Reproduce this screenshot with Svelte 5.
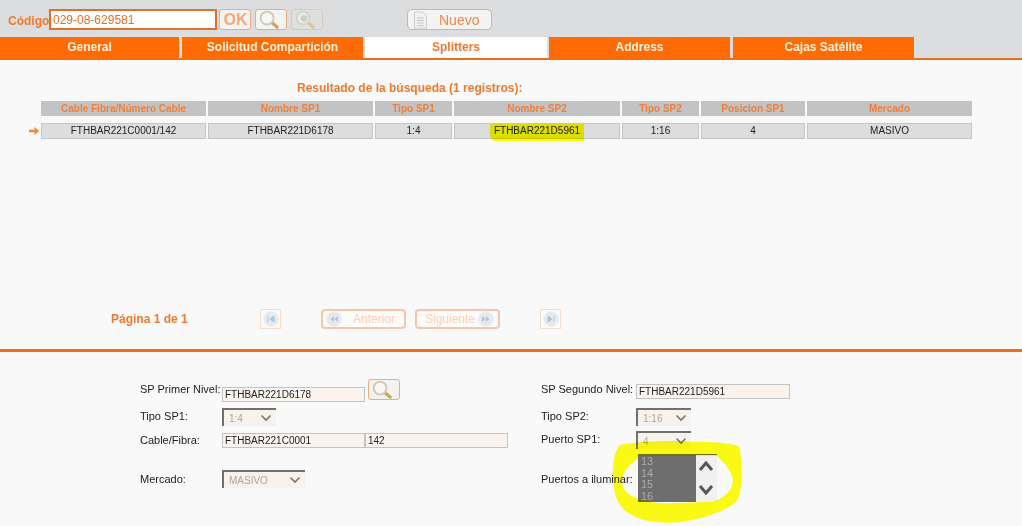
<script>
  // Búsqueda de splitters: barra de código, pestañas, resultados y detalle.
  const tabs = [
    { label: 'General', width: 179 },
    { label: 'Solicitud Compartición', width: 181, gap: 3 },
    { label: 'Splitters', width: 182, gap: 2, active: true },
    { label: 'Address', width: 181, gap: 2 },
    { label: 'Cajas Satélite', width: 181, gap: 3 }
  ];
  const columns = ['Cable Fibra/Número Cable', 'Nombre SP1', 'Tipo SP1', 'Nombre SP2', 'Tipo SP2', 'Posicion SP1', 'Mercado'];
  const row = ['FTHBAR221C0001/142', 'FTHBAR221D6178', '1:4', 'FTHBAR221D5961', '1:16', '4', 'MASIVO'];
  const ports = ['13', '14', '15', '16'];
</script>

{#snippet lens(faded)}
  <svg class="lens" class:faded viewBox="0 0 24 20" width="24" height="19" aria-hidden="true">
    <line x1="14.5" y1="13" x2="20.5" y2="18" stroke="#cda75e" stroke-width="3.4" stroke-linecap="round" />
    <circle cx="10" cy="8.5" r="6.8" fill="#f6f6f2" stroke="#cfc9b8" stroke-width="2" />
    {#if faded}<circle cx="11" cy="9" r="3.5" fill="#9cc8a0" />{/if}
  </svg>
{/snippet}

{#snippet pageIcon(kind)}
  <svg viewBox="0 0 18 18" width="18" height="18" aria-hidden="true">
    <circle cx="9" cy="9" r="7.5" fill="#e3eaf2" stroke="#eef1f5" />
    {#if kind === 'first'}
      <path d="M6 6v6M12 6L8 9l4 3z" fill="#b3c4d8" stroke="#b3c4d8" />
    {:else if kind === 'last'}
      <path d="M12 6v6M6 6l4 3-4 3z" fill="#b3c4d8" stroke="#b3c4d8" />
    {:else if kind === 'prev'}
      <path d="M9 6L5.500 9 9 12zM13 6L9.500 9l3.500 3z" fill="#b3c4d8" />
    {:else}
      <path d="M9 6l3.500 3L9 12zM5 6l3.500 3L5 12z" fill="#b3c4d8" />
    {/if}
  </svg>
{/snippet}

{#snippet caret()}
  <svg class="caret" viewBox="0 0 12 8" width="12" height="8" aria-hidden="true">
    <path d="M1.500 1.500L6 6l4.500-4.500" fill="none" stroke="#777" stroke-width="1.600" />
  </svg>
{/snippet}

<div class="page">
  <header class="topbar">
    <span class="code-label">Código</span>
    <input class="code-input" value="029-08-629581" />
    <button class="tool ok">OK</button>
    <button class="tool icon">{@render lens(false)}</button>
    <button class="tool icon off">{@render lens(true)}</button>
    <button class="tool nuevo">
      <svg viewBox="0 0 15 18" width="15" height="18" aria-hidden="true">
        <path d="M1.500 1h8l4 4v12h-12z" fill="#f1f1f1" stroke="#cfcfcf" />
        <path d="M4 7h7M4 9.500h7M4 12h7M4 14.500h7" stroke="#c8c8c8" />
      </svg>
      <span>Nuevo</span>
    </button>
  </header>

  <nav class="tabs">
    {#each tabs as tab}
      <div class="tab" class:active={tab.active} style="width: {tab.width}px; margin-left: {tab.gap ?? 0}px">{tab.label}</div>
    {/each}
  </nav>

  <main class="results">
    <h2>Resultado de la búsqueda (1 registros):</h2>
    <div class="grid">
      <span></span>
      {#each columns as col}
        <div class="th">{col}</div>
      {/each}
      <svg class="arrow" viewBox="0 0 10 8" width="10" height="8" aria-hidden="true">
        <path d="M0 2.800h5.500V0L10 4 5.500 8V5.200H0z" fill="#f5872f" />
      </svg>
      {#each row as cell}
        <div class="td">{cell}</div>
      {/each}
    </div>

    <div class="pager">
      <span class="page-count">Página 1 de 1</span>
      <button class="pg square first">{@render pageIcon('first')}</button>
      <button class="pg wide prev">{@render pageIcon('prev')}<span>Anterior</span></button>
      <button class="pg wide next"><span>Siguiente</span>{@render pageIcon('next')}</button>
      <button class="pg square last">{@render pageIcon('last')}</button>
    </div>
  </main>

  <section class="detail">
    <div class="col left">
      <div class="field first-field">
        <span class="lbl">SP Primer Nivel:</span>
        <input class="txt w143 low" value="FTHBAR221D6178" />
        <button class="tool icon detail-lens">{@render lens(false)}</button>
      </div>
      <div class="field sel-row">
        <span class="lbl">Tipo SP1:</span>
        <div class="sel w54"><span>1:4</span>{@render caret()}</div>
      </div>
      <div class="field cable">
        <span class="lbl">Cable/Fibra:</span>
        <input class="txt w143" value="FTHBAR221C0001" />
        <input class="txt w143" value="142" />
      </div>
      <div class="field market">
        <span class="lbl">Mercado:</span>
        <div class="sel w83"><span>MASIVO</span>{@render caret()}</div>
      </div>
    </div>

    <div class="col right">
      <div class="field second-field">
        <span class="lbl">SP Segundo Nivel:</span>
        <input class="txt w154" value="FTHBAR221D5961" />
      </div>
      <div class="field sel-row">
        <span class="lbl">Tipo SP2:</span>
        <div class="sel w55"><span>1:16</span>{@render caret()}</div>
      </div>
      <div class="field port">
        <span class="lbl">Puerto SP1:</span>
        <div class="sel w55"><span>4</span>{@render caret()}</div>
      </div>
      <div class="field listrow">
        <span class="lbl">Puertos a iluminar:</span>
        <div class="listbox">
          <div class="options">
            {#each ports as p}<div>{p}</div>{/each}
          </div>
          <div class="scroll">
            <svg viewBox="0 0 16 12" width="16" height="12" aria-hidden="true"><path d="M2 10l6-7 6 7" fill="none" stroke="#555" stroke-width="3" /></svg>
            <svg viewBox="0 0 16 12" width="16" height="12" aria-hidden="true"><path d="M2 2l6 7 6-7" fill="none" stroke="#555" stroke-width="3" /></svg>
          </div>
        </div>
      </div>
    </div>
  </section>

  <!-- Marcas de resaltador hechas a mano sobre la captura -->
  <svg class="marker" viewBox="0 0 1022 526" width="1022" height="526" aria-hidden="true">
    <path d="M490 124h94v17h-88q-5 0-6-5z" fill="#ffff00" />
    <path
      transform="translate(600 425) scale(0.3333)"
      fill-rule="evenodd"
      fill="#ffff14"
      d="M60 60C110 50 200 45 280 50C340 50 420 55 420 70C425 120 430 170 415 220C400 250 330 275 250 290C170 300 90 285 60 240C40 210 35 160 40 120C42 90 50 70 60 60ZM115 92L350 92C380 120 395 140 398 165C400 190 380 215 340 230L200 235C130 235 85 215 70 190C60 160 70 130 115 100Z"
    />
  </svg>
</div>

<style>
  :global(body) {
    margin: 0;
    background: #f9f9f9;
  }

  .page {
    position: relative;
    width: 1022px;
    height: 526px;
    overflow: hidden;
    font-family: 'Liberation Sans', Arial, sans-serif;
    font-size: 11px;
    color: #222;
    background: #f9f9f9;
  }

  button {
    padding: 0;
    font-family: inherit;
  }

  .topbar {
    display: flex;
    align-items: flex-start;
    height: 37px;
    padding: 9px 0 0 8px;
    box-sizing: border-box;
    background: #dcdddf;
  }

  .code-label {
    width: 41px;
    font-size: 12px;
    font-weight: bold;
    line-height: 24px;
    color: #ef7a2e;
  }

  .code-input {
    width: 168px;
    height: 21px;
    box-sizing: border-box;
    padding: 0 2px;
    border: 2px solid #e2702a;
    background: #fff;
    font: 12px 'Liberation Sans', Arial, sans-serif;
    color: #e2702a;
  }

  .tool {
    display: flex;
    align-items: center;
    justify-content: center;
    height: 21px;
    box-sizing: border-box;
    border: 1px solid #eeaa80;
    border-radius: 3px;
    background: #f3f3f1;
  }

  .ok {
    width: 32px;
    margin-left: 2px;
    padding-left: 1px;
    font-size: 16px;
    font-weight: bold;
    color: #f7a878;
  }

  .icon {
    width: 32px;
    margin-left: 4px;
  }

  .lens {
    margin-right: 5px;
  }

  .off {
    border-color: #dcc9bb;
    background: #dfdfdd;
  }

  .faded {
    opacity: 0.45;
  }

  .nuevo {
    justify-content: flex-start;
    gap: 11px;
    width: 85px;
    margin-left: 84px;
    padding-left: 5px;
    border-radius: 5px;
    font-size: 14px;
    color: #f08a4b;
  }

  .tabs {
    display: flex;
    height: 23px;
    box-sizing: border-box;
    border-bottom: 2px solid #ec6d1c;
    background: #dcdddf;
  }

  .tab {
    height: 23px;
    background: #ff6c06;
    font-size: 12px;
    font-weight: bold;
    line-height: 20px;
    text-align: center;
    color: #fff3df;
  }

  .tab.active {
    height: 21px;
    background: #fff;
    color: #ef7a2e;
  }

  .results {
    height: 292px;
    box-sizing: border-box;
    padding-top: 21px;
    border-bottom: 3px solid #f0701a;
  }

  h2 {
    margin: 0 0 6px;
    padding-left: 297px;
    font-size: 12px;
    line-height: 14px;
    color: #ef7a2e;
  }

  .grid {
    display: grid;
    grid-template-columns: 11px 165px 165px 77px 166px 77px 104px 165px;
    grid-template-rows: 15px 16px;
    gap: 7px 2px;
    margin-left: 28px;
  }

  .th {
    background: #c2c3c5;
    font-size: 10px;
    font-weight: bold;
    line-height: 15px;
    text-align: center;
    color: #ef7f3a;
  }

  .td {
    box-sizing: border-box;
    border: 1px solid #c6c7c9;
    background: #dcdddf;
    font-size: 10px;
    line-height: 14px;
    text-align: center;
    color: #222;
  }

  .arrow {
    align-self: center;
    margin-left: 1px;
  }

  .pager {
    display: flex;
    align-items: center;
    height: 21px;
    margin-top: 169px;
    padding-left: 111px;
  }

  .page-count {
    width: 149px;
    font-size: 12px;
    font-weight: bold;
    color: #ef7a2e;
  }

  .pg {
    display: flex;
    align-items: center;
    height: 20px;
    box-sizing: border-box;
    background: #fbfbfb;
    font-size: 12px;
    color: #fbd0b4;
  }

  .square {
    justify-content: center;
    width: 21px;
    border: 1px solid #f5dccb;
  }

  .wide {
    width: 85px;
    border: 2px solid #f6c6a8;
    border-radius: 4px;
  }

  .prev {
    gap: 10px;
    margin-left: 40px;
    padding-left: 2px;
  }

  .next {
    gap: 2px;
    margin-left: 9px;
    padding-left: 8px;
  }

  .last {
    margin-left: 40px;
  }

  .detail {
    display: flex;
    height: 174px;
    box-sizing: border-box;
  }

  .col {
    display: flex;
    flex-direction: column;
  }

  .left {
    width: 401px;
    padding-left: 140px;
  }

  .field {
    position: relative;
    display: flex;
    align-items: flex-start;
  }

  .lbl {
    line-height: 14px;
    color: #222;
  }

  .left .lbl {
    width: 82px;
  }

  .right .lbl {
    width: 95px;
  }

  .txt {
    height: 15px;
    box-sizing: border-box;
    padding: 0 2px;
    border: 1px solid #c3c3c3;
    background: #fbf4ee;
    font: 10px 'Liberation Sans', Arial, sans-serif;
    color: #222;
  }

  .w143 { width: 143px; }
  .w154 { width: 154px; }

  .first-field {
    height: 23px;
    padding-top: 31px;
  }

  .first-field .lbl {
    margin-top: -1px;
  }

  .low {
    margin-top: 4px;
  }

  .detail-lens {
    margin: -4px 0 0 3px;
  }

  .second-field {
    height: 22px;
    padding-top: 32px;
  }

  .second-field .lbl {
    margin-top: -2px;
  }

  .sel {
    display: flex;
    align-items: center;
    justify-content: space-between;
    height: 18px;
    box-sizing: border-box;
    padding: 0 4px 0 5px;
    border-top: 2px solid #707070;
    border-left: 2px solid #707070;
    background: #f7f2ec;
    font-size: 10px;
    color: #a9a9a9;
  }

  .w54 { width: 54px; }
  .w55 { width: 55px; }
  .w83 { width: 83px; }

  .sel-row {
    height: 25px;
    padding-top: 2px;
  }

  .sel-row .lbl {
    padding-top: 1px;
  }

  .cable {
    height: 37px;
  }

  .market .lbl {
    padding-top: 2px;
  }

  .port {
    height: 23px;
    margin-top: -2px;
  }

  .port .lbl {
    padding-top: 1px;
  }

  .listrow .lbl {
    padding-top: 18px;
  }

  .listbox {
    display: flex;
    width: 79px;
    height: 48px;
    margin-left: 2px;
    box-sizing: border-box;
    border-top: 1px solid #6e6e6e;
    background: #f1f0ee;
  }

  .options {
    width: 58px;
    padding: 1px 0 0 3px;
    box-sizing: border-box;
    background: #6e6e6e;
    font-size: 11px;
    line-height: 11.500px;
    color: #aaa;
  }

  .scroll {
    display: flex;
    flex-direction: column;
    justify-content: space-between;
    padding: 5px 2px 6px;
  }

  .marker {
    position: absolute;
    inset: 0;
    mix-blend-mode: multiply;
    pointer-events: none;
  }
</style>
